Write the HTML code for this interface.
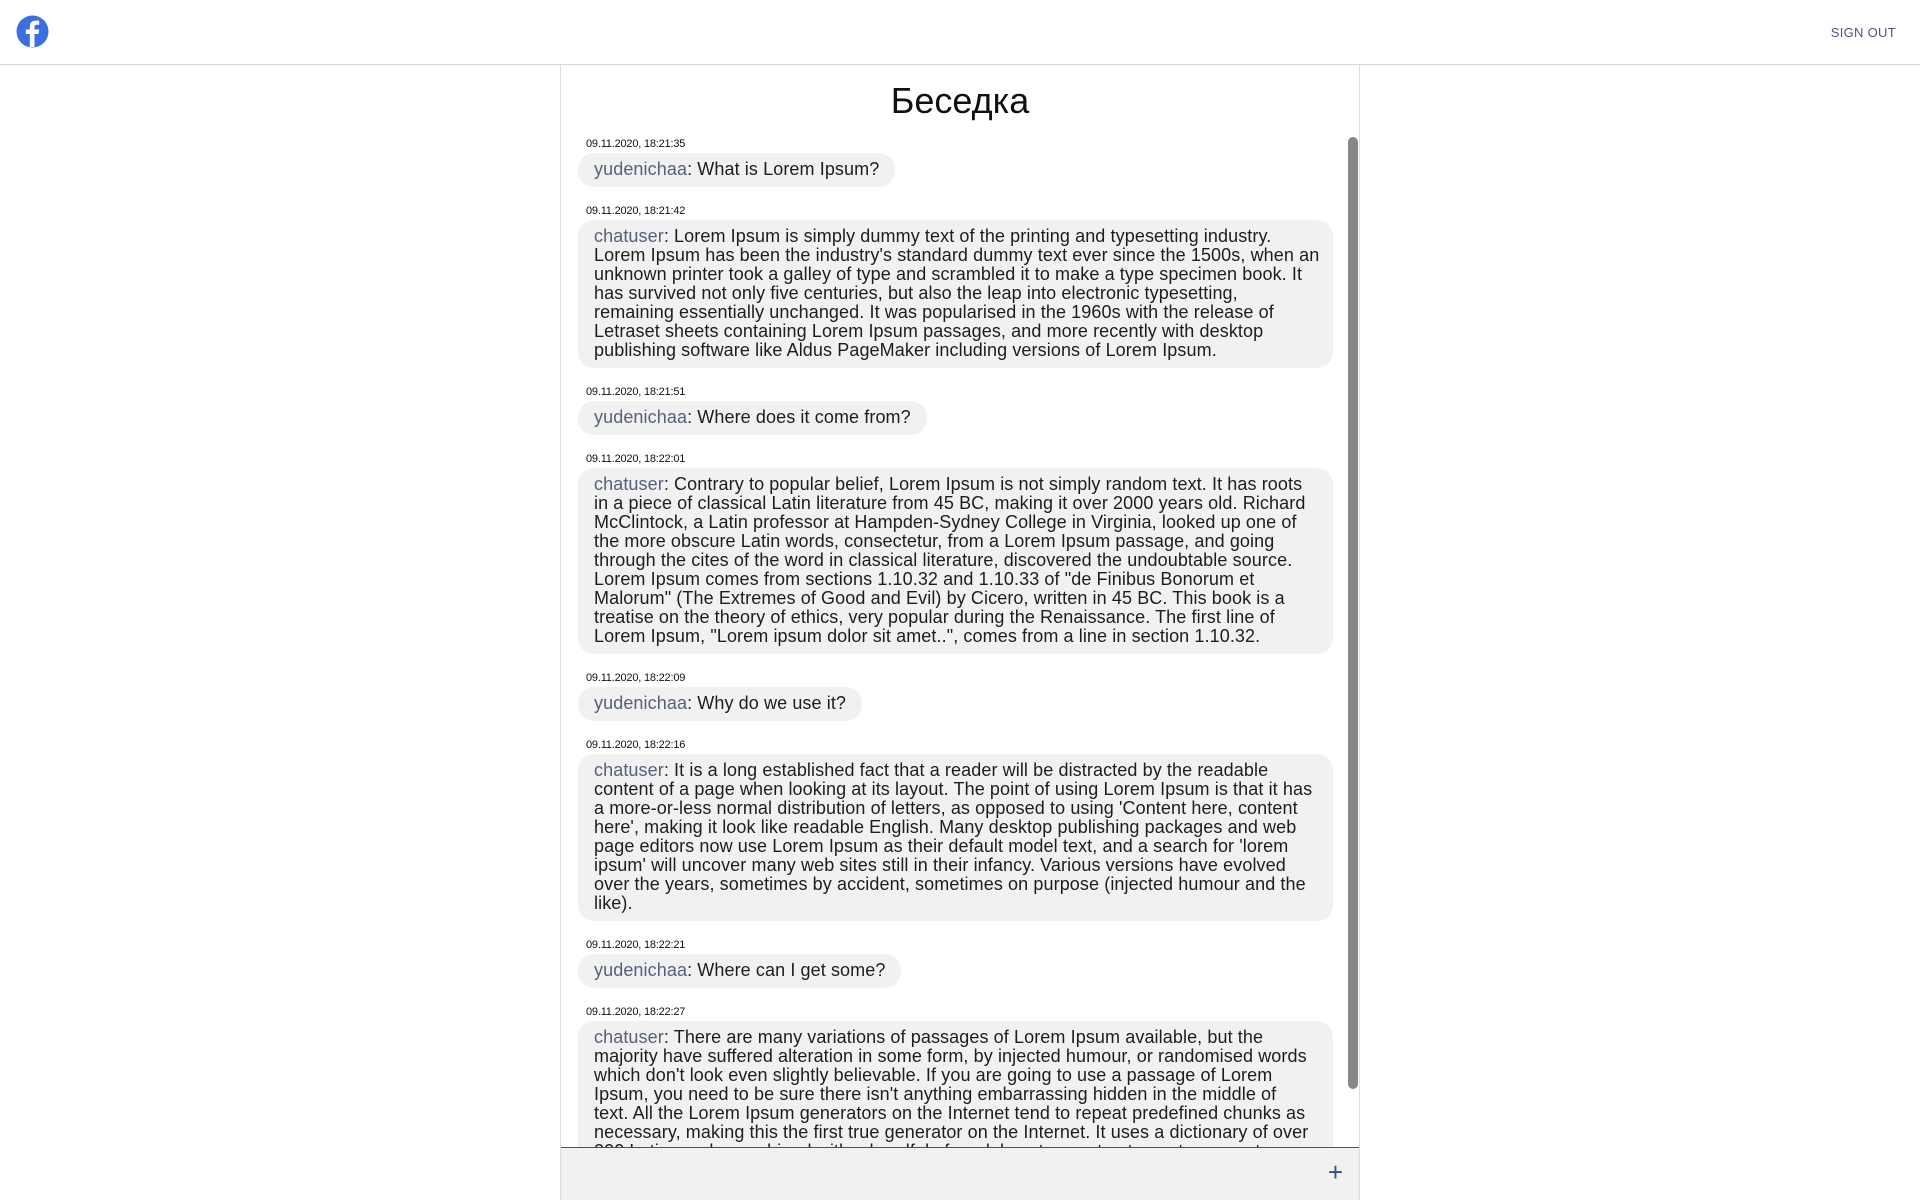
<!DOCTYPE html>
<html><head><meta charset="utf-8"><style>
*{box-sizing:border-box;margin:0;padding:0}
body{width:1920px;height:1200px;overflow:hidden;background:#fff;font-family:"Liberation Sans",sans-serif;position:relative}
.hdr{position:absolute;left:0;top:0;width:1920px;height:65px;border-bottom:1px solid #d6d6d6}
.so{position:absolute;right:24px;top:25px;font-size:13px;color:#4b5690;letter-spacing:0.3px}
.panel{position:absolute;left:560px;top:65px;width:800px;height:1135px;border-left:1px solid #ddd;border-right:1px solid #ddd;overflow:hidden}
h1{position:absolute;top:15px;left:0;width:100%;text-align:center;font-weight:normal;font-size:36px;color:#111}
.scroll{position:absolute;left:1348px;top:137px;width:10px;height:952px;background:#878787;border-radius:5px}
.msgs{position:absolute;left:17px;top:72px;width:760px}
.ts{font-size:11px;color:#111;height:14px;line-height:14px;margin:17px 0 2px 8px;letter-spacing:-0.2px}
.ts:first-child{margin-top:0}
.b{display:table;background:#f1f1f1;border-radius:16px;padding:7px 16px 8px;font-size:18px;line-height:19px;color:#1d1d1d;white-space:nowrap;letter-spacing:0.1px}
.b.w{display:block;width:755px}
.n{color:#55607f}
.foot{position:absolute;left:0;top:1082px;width:100%;height:60px;background:#f1f1f1;border-top:1px solid #44506e}
.plus{position:absolute;right:16px;top:9px;font-size:26px;color:#3a4c80}
</style></head><body>
<div class="hdr">
<svg style="position:absolute;left:16px;top:15px" width="33" height="33" viewBox="0 0 33 33"><circle cx="16.5" cy="16.5" r="16" fill="#3b6fe0"/><path d="M18.5 32V19h4l.6-4.5h-4.6v-2.6c0-1.3.4-2.2 2.2-2.2h2.5V5.8c-.4-.1-1.9-.2-3.6-.2-3.6 0-5.8 2.2-5.8 6V14.5h-4V19h4v13z" fill="#fff"/></svg>
<div class="so">SIGN OUT</div>
</div>
<div class="panel">
<h1>Беседка</h1>
<div class="msgs">
<div class="ts">09.11.2020, 18:21:35</div>
<div class="b"><span class="n">yudenichaa</span>: What is Lorem Ipsum?</div>
<div class="ts">09.11.2020, 18:21:42</div>
<div class="b w"><span class="n">chatuser</span>: Lorem Ipsum is simply dummy text of the printing and typesetting industry.<br>Lorem Ipsum has been the industry's standard dummy text ever since the 1500s, when an<br>unknown printer took a galley of type and scrambled it to make a type specimen book. It<br>has survived not only five centuries, but also the leap into electronic typesetting,<br>remaining essentially unchanged. It was popularised in the 1960s with the release of<br>Letraset sheets containing Lorem Ipsum passages, and more recently with desktop<br>publishing software like Aldus PageMaker including versions of Lorem Ipsum.</div>
<div class="ts">09.11.2020, 18:21:51</div>
<div class="b"><span class="n">yudenichaa</span>: Where does it come from?</div>
<div class="ts">09.11.2020, 18:22:01</div>
<div class="b w"><span class="n">chatuser</span>: Contrary to popular belief, Lorem Ipsum is not simply random text. It has roots<br>in a piece of classical Latin literature from 45 BC, making it over 2000 years old. Richard<br>McClintock, a Latin professor at Hampden-Sydney College in Virginia, looked up one of<br>the more obscure Latin words, consectetur, from a Lorem Ipsum passage, and going<br>through the cites of the word in classical literature, discovered the undoubtable source.<br>Lorem Ipsum comes from sections 1.10.32 and 1.10.33 of "de Finibus Bonorum et<br>Malorum" (The Extremes of Good and Evil) by Cicero, written in 45 BC. This book is a<br>treatise on the theory of ethics, very popular during the Renaissance. The first line of<br>Lorem Ipsum, "Lorem ipsum dolor sit amet..", comes from a line in section 1.10.32.</div>
<div class="ts">09.11.2020, 18:22:09</div>
<div class="b"><span class="n">yudenichaa</span>: Why do we use it?</div>
<div class="ts">09.11.2020, 18:22:16</div>
<div class="b w"><span class="n">chatuser</span>: It is a long established fact that a reader will be distracted by the readable<br>content of a page when looking at its layout. The point of using Lorem Ipsum is that it has<br>a more-or-less normal distribution of letters, as opposed to using 'Content here, content<br>here', making it look like readable English. Many desktop publishing packages and web<br>page editors now use Lorem Ipsum as their default model text, and a search for 'lorem<br>ipsum' will uncover many web sites still in their infancy. Various versions have evolved<br>over the years, sometimes by accident, sometimes on purpose (injected humour and the<br>like).</div>
<div class="ts">09.11.2020, 18:22:21</div>
<div class="b"><span class="n">yudenichaa</span>: Where can I get some?</div>
<div class="ts">09.11.2020, 18:22:27</div>
<div class="b w"><span class="n">chatuser</span>: There are many variations of passages of Lorem Ipsum available, but the<br>majority have suffered alteration in some form, by injected humour, or randomised words<br>which don't look even slightly believable. If you are going to use a passage of Lorem<br>Ipsum, you need to be sure there isn't anything embarrassing hidden in the middle of<br>text. All the Lorem Ipsum generators on the Internet tend to repeat predefined chunks as<br>necessary, making this the first true generator on the Internet. It uses a dictionary of over<br>200 Latin words, combined with a handful of model sentence structures, to generate</div>
</div>
<div class="foot"><div class="plus">+</div></div>
</div>
<div class="scroll"></div>
</body></html>
